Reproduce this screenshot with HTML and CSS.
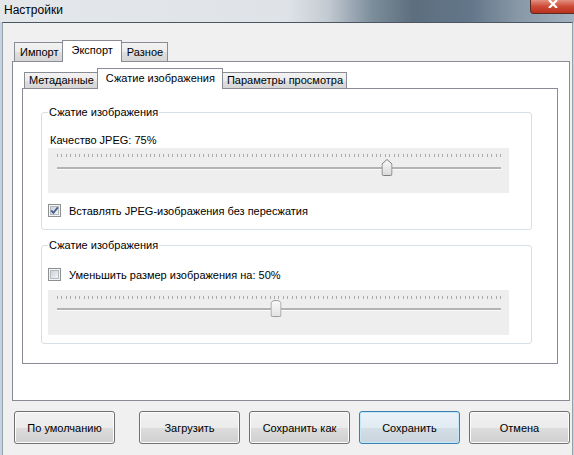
FILE: index.html
```html
<!DOCTYPE html>
<html lang="ru">
<head>
    <meta charset="UTF-8">
    <title>Настройки</title>
    <link rel="stylesheet" href="styles.css">
</head>
<body>
    <div class="window">
        <div class="titlebar">
            <div class="title">Настройки</div>
            <div class="close">
                <svg width="14" height="8" viewBox="0 0 14 8"><path d="M3 0 L11 8 M11 0 L3 8" stroke="#fff" stroke-width="2.2"/></svg>
            </div>
        </div>
        <div class="client">
            <div class="tabctl outer">
                <div class="tabrow">
                    <div class="tab">Импорт</div>
                    <div class="tab active">Экспорт</div>
                    <div class="tab">Разное</div>
                </div>
                <div class="panel">
                    <div class="tabctl inner">
                        <div class="tabrow">
                            <div class="tab">Метаданные</div>
                            <div class="tab active">Сжатие изображения</div>
                            <div class="tab">Параметры просмотра</div>
                        </div>
                        <div class="panel">
                            <fieldset class="group first">
                                <legend>Сжатие изображения</legend>
                                <div class="label">Качество JPEG: 75%</div>
                                <div class="slider">
                                    <div class="ticks"></div>
                                    <div class="track">
                                        <svg class="thumb" style="left: 75%" width="11" height="17" viewBox="0 0 11 17">
                                            <defs><linearGradient id="tg1" x1="0" y1="0" x2="0" y2="1"><stop offset="0" stop-color="#fbfbfb"/><stop offset="1" stop-color="#d9d9d9"/></linearGradient></defs>
                                            <path d="M0.5 5 L5.5 0.5 L10.5 5 V15 Q10.5 16.5 9 16.5 H2 Q0.5 16.5 0.5 15 Z" fill="url(#tg1)" stroke="#7d7d7d"/>
                                        </svg>
                                    </div>
                                </div>
                                <div class="check-row">
                                    <svg class="box" width="13" height="13" viewBox="0 0 13 13">
                                        <defs><linearGradient id="cb1" x1="0" y1="0" x2="1" y2="1"><stop offset="0" stop-color="#cbd0d6"/><stop offset="1" stop-color="#f5f6f7"/></linearGradient></defs>
                                        <rect x="0.5" y="0.5" width="12" height="12" fill="#f4f4f4" stroke="#8e8f8f"/>
                                        <rect x="2.5" y="2.5" width="8" height="8" fill="url(#cb1)" stroke="#b4b9bf"/>
                                        <path d="M3.2 6.3 L5.4 8.8 L9.8 3.4" fill="none" stroke="#4a5e8c" stroke-width="1.8"/>
                                    </svg>
                                    <span>Вставлять JPEG-изображения без пересжатия</span>
                                </div>
                            </fieldset>
                            <fieldset class="group second">
                                <legend>Сжатие изображения</legend>
                                <div class="check-row">
                                    <svg class="box" width="13" height="13" viewBox="0 0 13 13">
                                        <defs><linearGradient id="cb2" x1="0" y1="0" x2="1" y2="1"><stop offset="0" stop-color="#cbd0d6"/><stop offset="1" stop-color="#f5f6f7"/></linearGradient></defs>
                                        <rect x="0.5" y="0.5" width="12" height="12" fill="#f4f4f4" stroke="#8e8f8f"/>
                                        <rect x="2.5" y="2.5" width="8" height="8" fill="url(#cb2)" stroke="#b4b9bf"/>
                                    </svg>
                                    <span>Уменьшить размер изображения на: 50%</span>
                                </div>
                                <div class="slider">
                                    <div class="ticks"></div>
                                    <div class="track">
                                        <svg class="thumb" style="left: 50%" width="11" height="17" viewBox="0 0 11 17">
                                            <defs><linearGradient id="tg2" x1="0" y1="0" x2="0" y2="1"><stop offset="0" stop-color="#fbfbfb"/><stop offset="1" stop-color="#e2e2e2"/></linearGradient></defs>
                                            <path d="M0.5 4 Q0.5 0.5 5.5 0.5 Q10.5 0.5 10.5 4 V15 Q10.5 16.5 9 16.5 H2 Q0.5 16.5 0.5 15 Z" fill="url(#tg2)" stroke="#9a9a9a"/>
                                        </svg>
                                    </div>
                                </div>
                            </fieldset>
                        </div>
                    </div>
                </div>
            </div>
            <div class="buttons">
                <button class="btn wide-gap">По умолчанию</button>
                <button class="btn">Загрузить</button>
                <button class="btn">Сохранить как</button>
                <button class="btn default">Сохранить</button>
                <button class="btn">Отмена</button>
            </div>
        </div>
    </div>
</body>
</html>
```

FILE: styles.css
```css
* {
    box-sizing: border-box;
}
body {
    margin: 0;
    font-family: "Liberation Sans", Arial, sans-serif;
    font-size: 11px;
    color: #000;
}
.window {
    width: 574px;
    height: 455px;
    background: #c4d3e1;
    overflow: hidden;
    display: flex;
    flex-direction: column;
}
.titlebar {
    height: 22px;
    flex: none;
    position: relative;
    background: linear-gradient(to right, #e4e8eb 0, #dfe3e7 50%, #c3cbd2 57%, #7b8c9a 65%, #5d6f7e 72%, #63768a 82%, #8797a5 90%, #a3b2c0 100%);
}
.title {
    font-size: 12px;
    line-height: 14px;
    padding: 3px 0 0 4px;
}
.close {
    position: absolute;
    top: 0;
    right: 0;
    width: 44px;
    height: 14px;
    border: 1px solid #5b2a22;
    border-top: none;
    border-right: none;
    border-radius: 0 0 0 4px;
    background: linear-gradient(#e3907f, #cc4a36 50%, #b9331f);
    text-align: center;
}
.close svg {
    display: block;
    margin: 0 auto;
}
.client {
    flex: 1;
    margin: 0 1px 0 2px;
    background: #f0f0f0;
    border-top: 1px solid #4b5660;
    border-left: 1px solid #98a0a8;
    border-right: 1px solid #98a0a8;
}

/* tab controls */
.tabctl.outer {
    margin: 17px 0 0 9px;
    width: 558px;
}
.tabctl.inner {
    margin: 6px 0 0 9px;
    width: 536px;
}
.tabrow {
    display: flex;
    align-items: flex-end;
    height: 21px;
    padding-left: 2px;
}
.tab {
    height: 19px;
    line-height: 18px;
    padding: 0 4px 0 5px;
    border: 1px solid #898c95;
    border-bottom: none;
    background: linear-gradient(#f3f3f3, #ebebeb 50%, #dedede 51%, #d6d6d6);
    white-space: nowrap;
}
.tab + .tab {
    margin-left: -1px;
}
.tab.active {
    height: 22px;
    line-height: 19px;
    padding: 0 8px;
    margin-bottom: -1px;
    background: #fff;
    position: relative;
    z-index: 1;
}
.panel {
    border: 1px solid #898c95;
    background: #fff;
}
.outer > .panel {
    height: 340px;
}
.inner .tabrow {
    height: 20px;
}
.inner .tab {
    height: 16px;
    line-height: 15px;
    padding: 0 3px 0 4px;
}
.inner .tab.active {
    height: 21px;
    line-height: 19px;
    padding: 0 7px 0 8px;
}
.inner > .panel {
    height: 276px;
}

/* group boxes */
.group {
    margin: 0 0 0 18px;
    width: 491px;
    padding: 0 7px;
    border: 1px solid #d5dfe5;
    border-radius: 3px;
    min-width: 0;
}
.group legend {
    padding: 0 1px;
    margin-left: -1px;
    line-height: 12px;
}
.group.first {
    margin-top: 17px;
    padding-bottom: 12px;
}
.group.second {
    margin-top: 9px;
    padding-bottom: 8px;
}
.label {
    margin-top: 16px;
    line-height: 13px;
    padding-left: 1px;
}
.slider {
    margin: 1px 0 0 -1px;
    width: 461px;
    height: 45px;
    background: #eeeeee;
    padding: 6px 8px 0 9px;
}
.second .slider {
    margin-top: 9px;
}
.ticks {
    height: 3px;
    background: repeating-linear-gradient(to right, #aaaaaa 0 1px, transparent 1px 4.43px);
}
.track {
    position: relative;
    margin-top: 10px;
    height: 2px;
    background: #b3b3b3;
    box-shadow: 0 1px 0 #fbfbfb;
}
.second .track {
    margin-top: 9px;
}
.thumb {
    position: absolute;
    top: -8px;
    margin-left: -3px;
    transform: translateX(-50%);
}
.check-row {
    display: flex;
    align-items: center;
    gap: 8px;
    margin: 11px 0 0 -1px;
    height: 13px;
}
.second .check-row {
    margin-top: 17px;
}
.box {
    flex: none;
}

/* dialog buttons */
.buttons {
    display: flex;
    gap: 9px;
    margin: 10px 0 0 11px;
}
.btn {
    width: 101px;
    height: 33px;
    padding: 0;
    font-family: inherit;
    font-size: 11px;
    color: #000;
    border: 1px solid #707070;
    border-radius: 3px;
    background: linear-gradient(#f2f2f2, #ebebeb 50%, #dddddd 51%, #cfcfcf);
    box-shadow: inset 0 0 0 1px #fcfcfc;
}
.btn.wide-gap {
    margin-right: 15px;
}
.btn.default {
    border-color: #3c7fb1;
    background: linear-gradient(#eaf3f9, #e1ebf2 50%, #d3dee6 51%, #c9d5de);
    box-shadow: inset 0 0 0 1px #c5e7f8;
}
```
